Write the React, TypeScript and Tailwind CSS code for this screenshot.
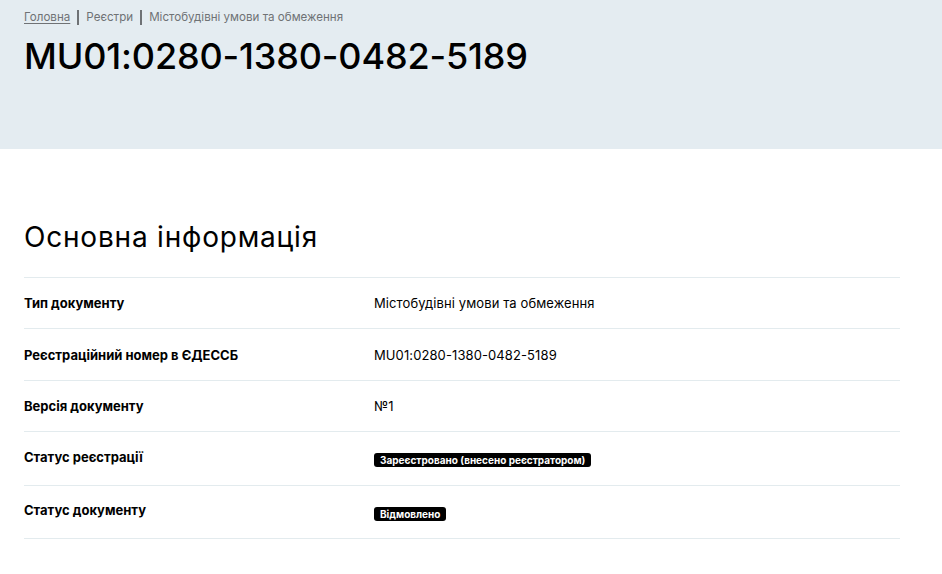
import React from "react";

const rows: { label: string; value: string; h: string; badge?: boolean }[] = [
  { label: "Тип документу", value: "Містобудівні умови та обмеження", h: "h-[51px]" },
  { label: "Реєстраційний номер в ЄДЕССБ", value: "MU01:0280-1380-0482-5189", h: "h-[52px]" },
  { label: "Версія документу", value: "№1", h: "h-[51px]" },
  { label: "Статус реєстрації", value: "Зареєстровано (внесено реєстратором)", h: "h-[54px]", badge: true },
  { label: "Статус документу", value: "Відмовлено", h: "h-[53px]", badge: true },
];

export default function App() {
  return (
    <div className="min-h-[574px] bg-white text-black" style={{ fontFamily: "Inter, 'Liberation Sans', sans-serif" }}>
      <div className="h-[149px] bg-[#e4ecf1] px-6 pt-[9px]">
        <div className="flex items-center text-[11.6px] text-[#6f7275]">
          <a className="underline underline-offset-2">Головна</a>
          <span className="mx-[7px] h-[15px] w-[2px] bg-[#6f7275]" />
          <span>Реєстри</span>
          <span className="mx-[7px] h-[15px] w-[2px] bg-[#6f7275]" />
          <span>Містобудівні умови та обмеження</span>
        </div>
        <h1 className="mt-[6px] text-[36px] font-medium leading-[48px] tracking-[-0.15px]">MU01:0280-1380-0482-5189</h1>
      </div>
      <div className="px-6 pt-[70px]">
        <h2 className="text-[28px] leading-[36px] tracking-[0.8px]">Основна інформація</h2>
        <div className="mt-[22px] w-[876px] border-t border-[#e3ebee]">
          {rows.map((r) => (
            <div
              key={r.label}
              className={`flex items-center border-b border-[#e3ebee] text-[13px] ${r.h} ${r.badge ? "pb-[2px]" : "pt-[2px]"}`}
            >
              <div className="w-[350px] font-bold">{r.label}</div>
              <div className="tracking-[0.1px]">
                {r.badge ? (
                  <span className="mt-[8px] inline-block rounded-[3px] bg-black px-[6px] py-[1px] text-[10px] font-bold leading-[12px] tracking-normal text-white">
                    {r.value}
                  </span>
                ) : (
                  r.value
                )}
              </div>
            </div>
          ))}
        </div>
      </div>
    </div>
  );
}
